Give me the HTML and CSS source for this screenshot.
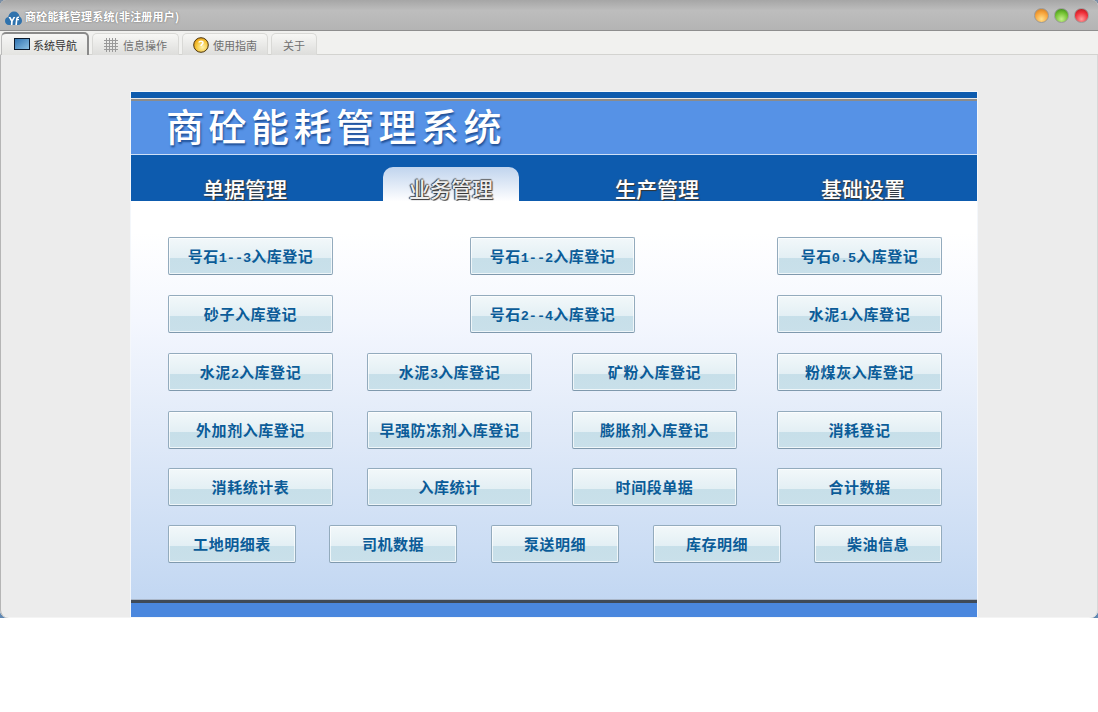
FILE: index.html
```html
<!DOCTYPE html>
<html lang="zh">
<head>
<meta charset="utf-8">
<title>商砼能耗管理系统</title>
<link rel="stylesheet" href="styles.css">
</head>
<body>
<div class="shell">
<div class="window">
  <header class="titlebar">
    <svg class="logo" width="17" height="14" viewBox="0 0 17 14"><path d="M4 14C1.500 14 0 12 0 10C0 8 1.300 6.300 3.200 6C3.800 2.500 6.300 .5 9 .5C12 .5 14.200 2.500 14.500 5.500C16 6.200 17 8 17 10C17 12.300 15.300 14 13 14Z" fill="#2f72ad"/><path d="M3.500 6H5.500L7 8.800L8.500 6H10.300L7.800 10.200L7.500 14H5.800L6 10.200ZM10.300 14L11 8C11.200 6.300 12.200 5.500 14 5.500V7C13 7 12.700 7.300 12.600 8H14V9.300H12.400L12 14Z" fill="#fff"/></svg>
    <span class="title">商砼能耗管理系统(非注册用户)</span>
    <div class="lights">
      <i class="light orange"></i><i class="light green"></i><i class="light red"></i>
    </div>
  </header>
  <nav class="tabs">
    <div class="tab active">
      <svg class="tab-icon" width="16" height="13" viewBox="0 0 16 13"><defs><linearGradient id="scr" x1="0" y1="0" x2="1" y2="1"><stop offset="0" stop-color="#2c6fae"/><stop offset="1" stop-color="#8fc4e6"/></linearGradient></defs><rect x=".5" y=".5" width="15" height="11" fill="url(#scr)" stroke="#0c1a2c"/></svg>
      <span>系统导航</span>
    </div>
    <div class="tab info">
      <svg class="tab-icon" width="14" height="14" viewBox="0 0 14 14"><path d="M0 2.500H14M0 5.500H14M0 8.500H14M0 11.500H14M2.500 0V14M5.500 0V14M8.500 0V14M11.500 0V14" stroke="#9a9a9a" fill="none"/></svg>
      <span>信息操作</span>
    </div>
    <div class="tab guide">
      <svg class="tab-icon" width="16" height="16" viewBox="0 0 16 16"><defs><radialGradient id="bulb" cx=".6" cy=".65" r=".7"><stop offset="0" stop-color="#fff3b0"/><stop offset=".6" stop-color="#f5c63c"/><stop offset="1" stop-color="#e69a10"/></radialGradient></defs><circle cx="8" cy="8" r="7.300" fill="url(#bulb)" stroke="#4a3510"/><path d="M6 5.500C6 3.800 10 3.800 10 5.800C10 7.200 8 7.200 8 9" stroke="#fff" stroke-width="1.500" fill="none"/></svg>
      <span>使用指南</span>
    </div>
    <div class="tab plain"><span>关于</span></div>
  </nav>
  <main class="content">
    <section class="panel">
      <div class="banner"><h1>商砼能耗管理系统</h1></div>
      <div class="menu">
        <div class="menu-item">单据管理</div>
        <div class="menu-item current">业务管理</div>
        <div class="menu-item">生产管理</div>
        <div class="menu-item">基础设置</div>
      </div>
      <div class="body">
        <div class="row row-3">
          <a class="btn">号石<span class="num">1--3</span>入库登记</a>
          <a class="btn">号石<span class="num">1--2</span>入库登记</a>
          <a class="btn">号石<span class="num">0.5</span>入库登记</a>
        </div>
        <div class="row row-3">
          <a class="btn">砂子入库登记</a>
          <a class="btn">号石<span class="num">2--4</span>入库登记</a>
          <a class="btn">水泥<span class="num">1</span>入库登记</a>
        </div>
        <div class="row row-4">
          <a class="btn">水泥<span class="num">2</span>入库登记</a>
          <a class="btn">水泥<span class="num">3</span>入库登记</a>
          <a class="btn">矿粉入库登记</a>
          <a class="btn">粉煤灰入库登记</a>
        </div>
        <div class="row row-4">
          <a class="btn">外加剂入库登记</a>
          <a class="btn">早强防冻剂入库登记</a>
          <a class="btn">膨胀剂入库登记</a>
          <a class="btn">消耗登记</a>
        </div>
        <div class="row row-4 tight">
          <a class="btn">消耗统计表</a>
          <a class="btn">入库统计</a>
          <a class="btn">时间段单据</a>
          <a class="btn">合计数据</a>
        </div>
        <div class="row row-5 tight">
          <a class="btn">工地明细表</a>
          <a class="btn">司机数据</a>
          <a class="btn">泵送明细</a>
          <a class="btn">库存明细</a>
          <a class="btn">柴油信息</a>
        </div>
      </div>
      <div class="footer"></div>
    </section>
  </main>
</div>
</div>
</body>
</html>
```

FILE: styles.css
```css
* { box-sizing: border-box; }
html, body { margin: 0; padding: 0; background: #fff; }
body { font-family: "Noto Sans CJK SC", "Liberation Sans", sans-serif; width: 1098px; height: 712px; overflow: hidden; }

.shell { width: 1098px; height: 618px; background: linear-gradient(#7a8fa6 0, #7a8fa6 5%, #fff 5%, #fff 97%, #5f87b2 97%); }
.window { width: 1098px; height: 618px; background: #ececec; border-radius: 6px 6px 8px 8px; overflow: hidden; display: flex; flex-direction: column; box-shadow: inset 1px 0 0 #b5b5b5, inset -1px 0 0 #d8d8d8, inset 0 -1px 0 #f4f4f4; }

.titlebar { height: 31px; flex: none; display: flex; align-items: center; padding: 2px 9px 0 5px; background: linear-gradient(#a6a6a6 0, #bdbdbd 35%, #b4b4b4 100%); border-bottom: 1px solid #8e8e8e; }
.logo { flex: none; margin-top: 4px; }
.title { margin-left: 3px; font-size: 11px; font-weight: 700; color: #fff; text-shadow: 0 0 2px #666; letter-spacing: .2px; }
.lights { margin-left: auto; display: flex; gap: 5px; margin-top: -1px; }
.light { display: block; width: 15px; height: 15px; border-radius: 50%; border: 1px solid #9a9a9a; }
.orange { background: radial-gradient(circle at 50% 78%, #ffe08a 0, #f7a33a 55%, #c8741f 100%); }
.green { background: radial-gradient(circle at 50% 78%, #c5f08a 0, #72c030 55%, #2f8015 100%); }
.red { background: radial-gradient(circle at 50% 78%, #ff9c9c 0, #f0303a 55%, #a81418 100%); }

.tabs { height: 24px; flex: none; display: flex; align-items: flex-end; padding-left: 1px; gap: 3px; background: #f1f1ef; border-bottom: 1px solid #d3d3d0; }
.tab { height: 22px; margin-bottom: -1px; padding: 0 11px; display: flex; align-items: center; font-size: 11px; color: #6f6f6f; background: linear-gradient(#f7f7f5, #dddddb); border: 1px solid #d9d9d6; border-bottom: 0; border-radius: 5px 5px 0 0; white-space: nowrap; }
.tab.active { height: 23px; padding: 0 10px 0 12px; gap: 3px; color: #333; background: linear-gradient(#f6f6f5, #e4e4e1); border-width: 2px 2px 0 1px; border-color: #8a8a8a #8a8a8a transparent #bcbcbc; }
.tab.info { gap: 5px; }
.tab.guide { gap: 4px; padding: 0 10px; }
.tab-icon { flex: none; }

.content { flex: 1; min-height: 0; padding: 37px 121px 0 131px; }
.panel { width: 846px; height: 525px; display: flex; flex-direction: column; box-shadow: 0 0 0 1px #f4f7fb; }

.banner { height: 63px; flex: none; background: #5692e6; border-top: 6px solid #0d5bae; box-shadow: inset 0 1px 0 #e7e7e7, inset 0 3px 0 #8b8b8b; border-bottom: 1px solid #cfe0f6; }
.banner h1 { margin: 0; padding: 2px 0 0 35px; font-size: 38px; line-height: 50px; font-weight: 500; color: #fff; letter-spacing: 4.500px; text-shadow: 1px 2px 2px #1f4f96; white-space: nowrap; }

.menu { height: 46px; flex: none; display: flex; align-items: flex-end; gap: 70px; padding-left: 46px; background: #0d5bae; }
.menu-item { height: 34px; width: 136px; padding-top: 8px; line-height: 26px; text-align: center; font-size: 21px; font-weight: 500; color: #fff; text-shadow: 1px 1px 1px #333, -1px 0 1px #555; }
.menu-item.current { border-radius: 10px 10px 0 0; background: linear-gradient(#c0d4ee, #fefeff); color: #eee; text-shadow: 1px 1px 1px #333, -1px 0 1px #333, 0 -1px 1px #555; }

.body { flex: 1; min-height: 0; padding: 36px 34px 0 37px; display: flex; flex-direction: column; gap: 20px; background: linear-gradient(#fff 0, #fff 8%, #f4f7fe 30%, #dfe9f8 60%, #c2d7f2 100%); }
.row { display: grid; flex: none; }
.row.tight { margin-top: -1px; }
.row-3 { grid-template-columns: 302px 307px 166px; }
.row-4 { grid-template-columns: 199px 205px 205px 166px; }
.row-5 { grid-template-columns: 161px 162px 162px 161px 129px; }
.btn { width: 165px; height: 38px; line-height: 36px; text-align: center; font-size: 15px; letter-spacing: .55px; font-weight: 700; color: #0b5c98; background: linear-gradient(#f2f8fa 0, #e3eff4 55%, #c7dfe9 57%, #c9e0ea 100%); border: 1px solid #93abbd; border-bottom-color: #7f99ad; border-radius: 2px; box-shadow: inset 0 0 0 1px rgba(255,255,255,.7); white-space: nowrap; }
.row-5 .btn { width: 128px; }
.num { font-family: "Liberation Mono", monospace; font-size: 13.500px; letter-spacing: 0; }

.footer { height: 17px; flex: none; background: #4a87de; border-top: 3px solid #3f4a58; box-shadow: 0 -1px 0 #aab7c9; }
```
